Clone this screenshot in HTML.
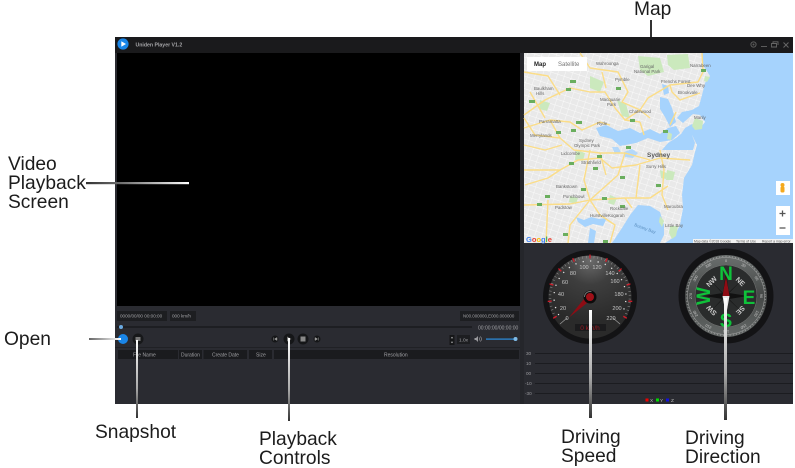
<!DOCTYPE html>
<html><head><meta charset="utf-8"><style>
html,body{margin:0;padding:0;background:#fff;width:795px;height:468px;overflow:hidden}
svg{display:block}
text{font-family:"Liberation Sans",sans-serif}
.lb{font-size:19.2px;fill:#1c1c1c}
.m{font-size:4.4px;fill:#666}
.c{fill:#a0a0a4}
.g{font-size:5.6px;fill:#c4c4c4;text-anchor:middle}
.cp{font-size:3.8px;fill:#ccc;text-anchor:middle}
.d{font-size:7px;font-weight:bold;fill:#ccc;text-anchor:middle}
.n{font-size:19px;font-weight:bold;fill:#0fc23a;text-anchor:middle}
</style></head><body>
<svg width="795" height="468" viewBox="0 0 795 468" xmlns="http://www.w3.org/2000/svg">
<defs>
<linearGradient id="h1" x1="0" x2="1" y1="0" y2="0"><stop offset="0" stop-color="#333"/><stop offset=".3" stop-color="#666"/><stop offset="1" stop-color="#fff"/></linearGradient>
<linearGradient id="h2" x1="0" x2="1" y1="0" y2="0"><stop offset="0" stop-color="#666"/><stop offset="1" stop-color="#fff"/></linearGradient>
<linearGradient id="v1" x1="0" x2="0" y1="0" y2="1"><stop offset="0" stop-color="#fff"/><stop offset=".62" stop-color="#aaa"/><stop offset="1" stop-color="#333"/></linearGradient>
<radialGradient id="dial" cx=".5" cy=".05" r=".75"><stop offset="0" stop-color="#6c6c6c"/><stop offset=".4" stop-color="#3e3e3e"/><stop offset="1" stop-color="#2a2a2a"/></radialGradient>
<linearGradient id="cring" x1="0" x2="0" y1="0" y2="1"><stop offset="0" stop-color="#6b6f6e"/><stop offset=".5" stop-color="#454847"/><stop offset="1" stop-color="#646867"/></linearGradient>
<pattern id="streets" width="7" height="6" patternUnits="userSpaceOnUse" patternTransform="rotate(18)"><path d="M0 0H7M0 0V6" stroke="#fff" stroke-width=".7" fill="none"/></pattern>
</defs>

<!-- window -->
<rect x="115" y="37" width="678" height="367" fill="#2a2b31"/>
<rect x="115" y="37" width="678" height="16" fill="#1a1a1c"/>
<rect x="117" y="53" width="403" height="253" fill="#000"/>
<rect x="520" y="53" width="4" height="351" fill="#25262b"/>

<!-- title bar -->
<circle cx="123" cy="44" r="5.6" fill="#1a86e8"/>
<path d="M121.3 41.3 L126 44 L121.3 46.7 Z" fill="#fff"/>
<text x="135.500" y="46.500" font-size="5.200" font-weight="bold" fill="#a5a5a8">Uniden Player V1.2</text>
<circle cx="753.500" cy="44.500" r="2.600" fill="none" stroke="#5c5c5c" stroke-width="1"/>
<circle cx="753.500" cy="44.500" r="1" fill="#5c5c5c"/>
<path d="M761 46.500H767" stroke="#5c5c5c" stroke-width="1"/>
<path d="M771.500 43.500h5v3.500h-5zM773 43v-1.200h5v3.200" fill="none" stroke="#666" stroke-width=".9"/>
<path d="M783.500 42.500l5 5M788.500 42.500l-5 5" stroke="#666" stroke-width="1"/>

<!-- map -->
<rect x="524" y="53" width="269" height="190" fill="#a6d3fd"/>
<path id="land" d="M524 53H702L703 65L710 76L705 83L702 95L699 106L692 110L682 112L677 118L683 123L693 114L700 115L705 122L700 128L692 124L685 128L681 134L676 138L668 143L662 150H693L695 143L692 135L697 145L695 152L692 165L684 178L682 195L683 208L680 225L674 237L665 243H524Z" fill="#e9e9e9"/>
<path d="M524 53H702L703 65L710 76L705 83L702 95L699 106L692 110L682 112L677 118L683 123L693 114L700 115L705 122L700 128L692 124L685 128L681 134L676 138L668 143L662 150H693L695 143L692 135L697 145L695 152L692 165L684 178L682 195L683 208L680 225L674 237L665 243H524Z" fill="url(#streets)"/>
<!-- harbour -->
<path d="M596 128L606 125L618 131L630 128L640 133L650 129L660 134L668 128L676 126L680 133L672 140L660 142L648 138L636 143L620 146L612 139L600 136Z" fill="#a6d3fd"/>
<path d="M624 152l8-3 6 4-5 5-8-1zM612 147l6 0 3 5-6 2z" fill="#a6d3fd" opacity=".8"/>
<!-- Botany bay -->
<path d="M638 205L650 206L660 212L664 225L664 235L660 243H612L622 228L630 215Z" fill="#a6d3fd"/>
<path d="M576 217l8 3 7-3 8 2 8-1-4 8-10-2-8 3-7-5zM590 228l6 3-2 12h-6z" fill="#a6d3fd"/>
<path d="M660 97l8 2 4 9 4 14-6 5-5-10-5-8zM662 84l6 2 1 7-5 2z" fill="#a6d3fd"/>
<!-- green -->
<g fill="#cbe9bd">
<path d="M638 56L660 58L664 72L648 76L640 70ZM667 55L688 54L690 68L674 70L668 65Z"/>
<path d="M590 76L604 82L600 92L590 88ZM617 100L626 104L630 118L622 116ZM540 100l10 3-3 8-8-2zM576 150l9 3-2 8-8-1zM610 195l7 3-3 7-6-2zM570 196l8 2-2 6-7-2z"/>
<path d="M695 118l8 3-1 8-7 1-3-4zM705 76l5 1-3 5-3-1zM667 170l8 2-2 8-7 0zM668 132l4 2-1 6-4-1zM670 226l8 0-2 10-4 3-3-6z"/>
<path d="M660 170l7 3-1 6-5-1zM660 216l4 5-2 6-3-5z"/>
</g>
<!-- roads -->
<g fill="none" stroke="#fbdd88" stroke-width="1.400" stroke-linejoin="round">
<path d="M524 115L545 100L570 88L590 92L605 92L615 108L625 120L640 122"/>
<path d="M580 53L590 68L618 72L628 92L622 102L640 110L650 118"/>
<path d="M702 53L703 72L698 82L670 85L648 98L640 110L625 120"/>
<path d="M524 128L550 120L570 122L582 130L600 122L610 125"/>
<path d="M524 118L535 135L560 138L574 150L600 153L625 153L650 160"/>
<path d="M524 170L560 170L578 160L600 158L612 168L636 165L660 158L690 160"/>
<path d="M524 205L570 204L590 200L625 198L650 198L668 186"/>
<path d="M590 150L584 180L590 200L600 215L615 225L610 243"/>
<path d="M625 153L618 175L590 200"/>
<path d="M676 112L670 125M700 93L680 100L672 92L670 85"/>
<path d="M640 122L644 135M660 150L664 170L662 195L668 210"/>
<path d="M524 145L545 150L562 145M550 120L560 138M548 200L546 243"/>
<path d="M625 198L632 208M524 72L548 76L560 95M530 92L545 118M525 185L548 178L560 170"/>
<path d="M590 200L570 225L568 243M600 153L606 175M640 165L636 198M606 88L602 72"/>
</g>
<!-- shields -->
<g fill="#6aae5e">
<rect x="570" y="80" width="6" height="3"/><rect x="566" y="88" width="5" height="3"/><rect x="616" y="87" width="5" height="3"/><rect x="529" y="100" width="6" height="3"/><rect x="576" y="121" width="6" height="3"/><rect x="571" y="129" width="5" height="3"/><rect x="556" y="131" width="5" height="3"/><rect x="630" y="119" width="5" height="3"/><rect x="701" y="69" width="5" height="3"/><rect x="663" y="130" width="5" height="3"/><rect x="626" y="146" width="5" height="3"/><rect x="597" y="155" width="5" height="3"/><rect x="569" y="162" width="5" height="3"/><rect x="593" y="167" width="5" height="3"/><rect x="620" y="176" width="5" height="3"/><rect x="656" y="184" width="5" height="3"/><rect x="581" y="188" width="5" height="3"/><rect x="545" y="195" width="5" height="3"/><rect x="537" y="203" width="5" height="3"/><rect x="602" y="197" width="5" height="3"/><rect x="620" y="205" width="5" height="3"/><rect x="563" y="233" width="5" height="3"/><rect x="603" y="240" width="5" height="3"/></g>
<!-- labels -->
<text x="534" y="90" class="m">Baulkham</text><text x="536" y="95" class="m">Hills</text>
<text x="596" y="65" class="m">Wahroonga</text>
<text x="615" y="81" class="m">Pymble</text>
<text x="600" y="101" class="m">Macquarie</text><text x="607" y="106" class="m">Park</text>
<text x="629" y="113" class="m">Chatswood</text>
<text x="640" y="68" class="m">Garigal</text><text x="634" y="73" class="m">National Park</text>
<text x="539" y="123" class="m">Parramatta</text>
<text x="530" y="137" class="m">Merrylands</text>
<text x="597" y="125" class="m">Ryde</text>
<text x="579" y="142" class="m">Sydney</text><text x="574" y="147" class="m">Olympic Park</text>
<text x="561" y="155" class="m">Lidcombe</text>
<text x="581" y="164" class="m">Strathfield</text>
<text x="647" y="157" font-size="6.500" fill="#555" font-weight="bold">Sydney</text>
<text x="646" y="168" class="m">Surry Hills</text>
<text x="556" y="188" class="m">Bankstown</text>
<text x="563" y="198" class="m">Punchbowl</text>
<text x="555" y="209" class="m">Padstow</text>
<text x="610" y="210" class="m">Rockdale</text>
<text x="590" y="217" class="m">Hurstville</text><text x="608" y="217" class="m">Kogarah</text>
<text x="634" y="226" font-size="4.400" fill="#5b8fc0" transform="rotate(20 634 226)">Botany Bay</text>
<text x="690" y="67" class="m">Narrabeen</text>
<text x="661" y="83" class="m">Frenchs Forest</text>
<text x="687" y="87" class="m">Dee Why</text>
<text x="678" y="94" class="m">Brookvale</text>
<text x="694" y="119" class="m">Manly</text>
<text x="664" y="208" class="m">Maroubra</text>
<text x="665" y="227" class="m">Little Bay</text>
<!-- map ui -->
<rect x="527" y="57" width="60" height="14" fill="#fff"/>
<text x="534" y="66" font-size="6" font-weight="bold" fill="#222">Map</text>
<text x="558" y="66" font-size="6" fill="#777">Satellite</text>
<text x="526" y="242" font-size="7.500" font-weight="bold"><tspan fill="#4285f4">G</tspan><tspan fill="#ea4335">o</tspan><tspan fill="#fbbc05">o</tspan><tspan fill="#4285f4">g</tspan><tspan fill="#34a853">l</tspan><tspan fill="#ea4335">e</tspan></text>
<rect x="776" y="181" width="14" height="14" fill="#fff"/>
<circle cx="782.500" cy="185" r="2" fill="#f4a91e"/><rect x="780.500" y="186.500" width="4" height="6" rx="1.500" fill="#f4a91e"/>
<rect x="776" y="206" width="14" height="29" fill="#fff"/>
<path d="M779.500 213.500h6M782.500 210.500v6M779.500 228h6" stroke="#555" stroke-width="1.300"/>
<rect x="693" y="239" width="100" height="4" fill="#f2f2f2"/>
<text x="694" y="242.500" font-size="3.400" fill="#555">Map data ©2018 Google</text>
<text x="736" y="242.500" font-size="3.400" fill="#555">Terms of Use</text>
<text x="762" y="242.500" font-size="3.400" fill="#555">Report a map error</text>

<!-- readouts -->
<g fill="#1d1e21"><rect x="117" y="311" width="50" height="10"/><rect x="170" y="311" width="26" height="10"/><rect x="460" y="311" width="59" height="10"/></g>
<text x="120" y="317.500" class="c" font-size="4.600">0000/00/00 00:00:00</text>
<text x="172" y="317.500" class="c" font-size="4.600">000 km/h</text>
<text x="463" y="317.500" class="c" font-size="4.400">N00.000000,E000.000000</text>
<!-- progress -->
<rect x="117" y="326.500" width="355" height="1" fill="#101012"/>
<circle cx="121" cy="327" r="2" fill="#6aa9e0"/>
<text x="478" y="329.500" class="c" font-size="5">00:00:00/00:00:00</text>
<rect x="115" y="347" width="405" height="1" fill="#202125"/>
<!-- buttons -->
<circle cx="123" cy="339" r="5" fill="#1a86e8"/>
<circle cx="138" cy="339" r="5.500" fill="#17181a"/>
<rect x="135.500" y="337" width="5" height="4" fill="#777"/>
<circle cx="275" cy="339" r="3.500" fill="#151618"/><path d="M273.500 337.500v3M277 337.500l-2.500 1.500 2.500 1.500z" fill="#999" stroke="#999" stroke-width=".5"/>
<circle cx="289" cy="339" r="5.500" fill="#151618"/><path d="M287 336.500l4.500 2.500-4.500 2.500z" fill="#777"/>
<circle cx="303" cy="339" r="5.500" fill="#151618"/><rect x="300.500" y="336.500" width="5" height="5" fill="#888"/>
<circle cx="317" cy="339" r="3.500" fill="#151618"/><path d="M318.500 337.500v3M315 337.500l2.500 1.500-2.500 1.500z" fill="#999" stroke="#999" stroke-width=".5"/>
<rect x="449.500" y="335" width="5" height="10" fill="#151618"/>
<path d="M450.800 338.200l1.200-1.500 1.200 1.500zM450.800 341.800l1.200 1.500 1.200-1.500z" fill="#bbb"/>
<rect x="457" y="335" width="13" height="9" fill="#1d1e21"/>
<text x="459" y="341.500" class="c" font-size="4.800">1.0x</text>
<path d="M474.500 338h1.500l2-2v6l-2-2h-1.500z" fill="#9a9a9e"/><path d="M479 337.500q1.500 1.500 0 3M480.300 336.500q2.500 2.500 0 5" fill="none" stroke="#9a9a9e" stroke-width=".6"/>
<rect x="486" y="338.500" width="29" height="1.200" fill="#2b8fe0"/>
<circle cx="515.500" cy="339" r="2" fill="#7fbbe8"/>
<!-- table -->
<g fill="#1a1b1e"><rect x="118" y="350" width="60" height="9"/><rect x="179" y="350" width="23" height="9"/><rect x="203.500" y="350" width="43.500" height="9"/><rect x="249" y="350" width="23" height="9"/><rect x="274" y="350" width="245" height="9"/></g>
<g font-size="5">
<text x="133" y="356.500" class="c">File Name</text><text x="181" y="356.500" class="c">Duration</text><text x="212" y="356.500" class="c">Create Date</text><text x="256" y="356.500" class="c">Size</text><text x="384" y="356.500" class="c">Resolution</text></g>

<!-- speedometer -->
<circle cx="590" cy="297" r="47" fill="#131315"/>
<circle cx="590" cy="297" r="41.500" fill="url(#dial)"/>
<path d="M560 324L567 318M620 324L613 318" stroke="#999" stroke-width=".8"/>
<path d="M555.360 317A40 40 0 1 1 624.640 317" fill="none" stroke="#999" stroke-width="2.500" stroke-dasharray=".5 3.300"/>
<path d="M558.820 315A36 36 0 1 1 621.180 315" fill="none" stroke="#e4e4e4" stroke-width="1.300" stroke-dasharray="1.200 6.340"/>
<g stroke="#d01c2a" stroke-width="1.300">
<path d="M590 258.500v-4" transform="rotate(-120 590 297)"/><path d="M590 258.500v-4" transform="rotate(-96 590 297)"/><path d="M590 258.500v-4" transform="rotate(-72 590 297)"/><path d="M590 258.500v-4" transform="rotate(-48 590 297)"/><path d="M590 258.500v-4" transform="rotate(-24 590 297)"/><path d="M590 258.500v-4"/><path d="M590 258.500v-4" transform="rotate(24 590 297)"/><path d="M590 258.500v-4" transform="rotate(48 590 297)"/><path d="M590 258.500v-4" transform="rotate(72 590 297)"/><path d="M590 258.500v-4" transform="rotate(96 590 297)"/><path d="M590 258.500v-4" transform="rotate(120 590 297)"/>
</g>
<text x="567" y="320" class="g">0</text><text x="563" y="310" class="g">20</text><text x="561" y="296" class="g">40</text><text x="565" y="284" class="g">60</text><text x="573" y="275" class="g">80</text><text x="584" y="269" class="g">100</text><text x="597" y="269" class="g">120</text><text x="610" y="275" class="g">140</text><text x="615" y="283" class="g">160</text><text x="619" y="296" class="g">180</text><text x="617" y="310" class="g">200</text><text x="611" y="320" class="g">220</text>
<path d="M569 317.500L587.500 294.500L592 299Z" fill="#8e0c14"/>
<circle cx="590" cy="297" r="6.500" fill="#0c0c0c"/>
<path d="M584.500 297a5.500 5.500 0 0 1 7-5.300" fill="none" stroke="#777" stroke-width="1"/>
<circle cx="590" cy="297" r="4" fill="#a01018"/>
<rect x="575" y="324" width="31" height="7" fill="#1b1b1d"/>
<text x="590" y="330" font-size="6.500" fill="#9c1a20" text-anchor="middle">0 km/h</text>

<!-- compass -->
<circle cx="726" cy="296" r="47.500" fill="#131315"/>
<circle cx="726" cy="296" r="41" fill="url(#cring)"/>
<circle cx="726" cy="296" r="39.500" fill="none" stroke="#bdbdbd" stroke-width="1.300" stroke-dasharray=".5 2.700"/>
<circle cx="726" cy="296" r="38.500" fill="none" stroke="#a8a8a8" stroke-width=".5"/>
<circle cx="726" cy="296" r="31" fill="#2a2c2c" stroke="#777" stroke-width=".5"/>
<path d="M726 296l-16-16 13 14zM726 296l16-16-14 13zM726 296l16 16-14-13zM726 296l-16 16 13-14z" fill="#111"/>
<path d="M726 272l3 21 19 3-19 3-3 19-3-19-19-3 19-3z" fill="#111"/>
<g transform="translate(726 296)">
<text class="cp" y="-34">0</text>
<text class="cp" transform="rotate(30) translate(0 -34)">30</text><text class="cp" transform="rotate(60) translate(0 -34)">60</text><text class="cp" transform="rotate(90) translate(0 -34)">90</text><text class="cp" transform="rotate(120) translate(0 -34)">120</text><text class="cp" transform="rotate(150) translate(0 -34)">150</text><text class="cp" transform="rotate(180) translate(0 -34)">180</text><text class="cp" transform="rotate(210) translate(0 -34)">210</text><text class="cp" transform="rotate(240) translate(0 -34)">240</text><text class="cp" transform="rotate(270) translate(0 -34)">270</text><text class="cp" transform="rotate(300) translate(0 -34)">300</text><text class="cp" transform="rotate(330) translate(0 -34)">330</text>
<text class="d" transform="rotate(-45) translate(0 -18)">NW</text><text class="d" transform="rotate(45) translate(0 -18)">NE</text><text class="d" transform="rotate(135) translate(0 -18)">SE</text><text class="d" transform="rotate(225) translate(0 -18)">SW</text>
<text class="n" transform="translate(0 -16)">N</text>
<text class="n" transform="translate(23 8)">E</text>
<text class="n" transform="translate(0 31)">S</text>
<text class="n" transform="rotate(-90) translate(0 -16)">W</text>
</g>
<path d="M726 276L729.500 296H722.500Z" fill="#8e0c14"/>
<path d="M722.500 296L729.500 296L726 316Z" fill="#e8e8e8"/>

<!-- chart -->
<g stroke="#1b1c20" stroke-width="1"><path d="M535 353.500H793M535 363.500H793M535 373.500H793M535 383.500H793M535 393.500H793"/></g>
<g font-size="4.600" fill="#9a9a9e"><text x="526" y="355">30</text><text x="526" y="365">10</text><text x="526" y="375">00</text><text x="525" y="385">-10</text><text x="525" y="395">-30</text></g>
<rect x="645.500" y="398.500" width="3" height="3" fill="#e00"/><text x="650" y="402" font-size="4.800" fill="#bbb">X</text>
<rect x="656" y="398.500" width="3" height="3" fill="#0d0"/><text x="660" y="402" font-size="4.800" fill="#bbb">Y</text>
<rect x="666" y="398.500" width="3" height="3" fill="#11d"/><text x="671" y="402" font-size="4.800" fill="#bbb">Z</text>

<!-- leaders -->
<rect x="86" y="182" width="103" height="2.200" fill="url(#h1)"/>
<rect x="89" y="338" width="32" height="2" fill="url(#h2)"/>
<rect x="136" y="340" width="2" height="78" fill="url(#v1)"/>
<rect x="288" y="338" width="2" height="83" fill="url(#v1)"/>
<rect x="589" y="310" width="3" height="108" fill="url(#v1)"/>
<rect x="724" y="298" width="3" height="122" fill="url(#v1)"/>
<rect x="650" y="20" width="2" height="17" fill="#333"/>

<!-- callouts -->
<text x="634" y="15" class="lb">Map</text>
<text x="8" y="170" class="lb">Video</text><text x="8" y="189" class="lb">Playback</text><text x="8" y="208" class="lb">Screen</text>
<text x="4" y="345" class="lb">Open</text>
<text x="95" y="438" class="lb">Snapshot</text>
<text x="259" y="445" class="lb">Playback</text><text x="259" y="464" class="lb">Controls</text>
<text x="561" y="443" class="lb">Driving</text><text x="561" y="462" class="lb">Speed</text>
<text x="685" y="444" class="lb">Driving</text><text x="685" y="463" class="lb">Direction</text>
</svg>
</body></html>
